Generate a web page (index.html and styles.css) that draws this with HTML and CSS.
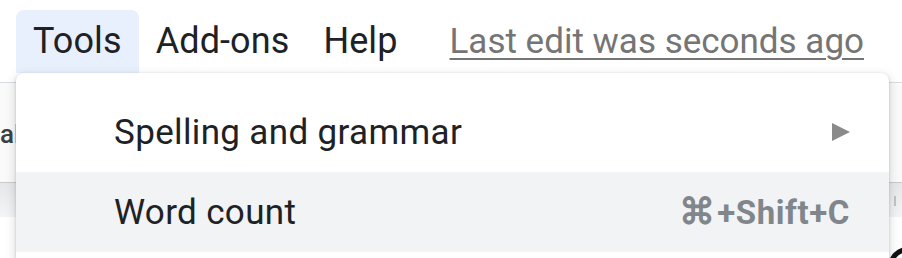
FILE: index.html
```html
<!DOCTYPE html>
<html>
<head>
<meta charset="utf-8">
<link rel="stylesheet" href="styles.css">
</head>
<body>
<div class="page">
  <nav class="menubar">
    <span class="menu-item active">Tools</span>
    <span class="menu-item">Add-ons</span>
    <span class="menu-item">Help</span>
    <a class="last-edit">Last edit was seconds ago</a>
  </nav>
  <div class="doc">
    <div class="toolbar">
      <span class="style-name">al</span>
    </div>
    <div class="ruler">
      <span class="tick"></span>
    </div>
    <div class="canvas">
      <span class="ring"></span>
    </div>
  </div>
  <div class="dropdown">
    <div class="row">
      <span class="label">Spelling and grammar</span>
      <svg class="arrow" width="18" height="18" viewBox="0 0 18 18"><polygon points="0,0 18,9 0,18" fill="#8a8a8a"/></svg>
    </div>
    <div class="row hover">
      <span class="label">Word count</span>
      <span class="shortcut"><span class="cmd">⌘</span>+Shift+C</span>
    </div>
  </div>
</div>
</body>
</html>
```
FILE: styles.css
```css
html, body {
  margin: 0;
  padding: 0;
  background: #fff;
}
body {
  width: 902px;
  height: 258px;
  overflow: hidden;
  font-family: Roboto, "Liberation Sans", Arial, sans-serif;
}
.page {
  position: relative;
  width: 902px;
  height: 258px;
  overflow: hidden;
}
.menubar {
  display: flex;
  align-items: center;
  padding: 10px 0 0 16px;
  height: 63px;
}
.menu-item {
  display: block;
  padding: 0 17px;
  height: 63px;
  line-height: 63px;
  font-size: 36px;
  color: #202124;
  letter-spacing: 0.1px;
}
.menu-item.active {
  background: #e8f0fe;
  border-radius: 8px 8px 0 0;
}
.last-edit {
  margin-left: 35px;
  font-size: 35px;
  line-height: 63px;
  color: #757575;
  text-decoration: underline;
  text-decoration-thickness: 2px;
  text-underline-offset: 5px;
}
.doc {
  display: flex;
  flex-direction: column;
}
.toolbar {
  margin-top: 9px;
  border-top: 1px solid #dadce0;
  height: 99px;
  display: flex;
  align-items: center;
  background: #fafafa;
}
.style-name {
  font-size: 26px;
  font-weight: 500;
  color: #3c4043;
  margin-top: 2px;
}
.ruler {
  height: 34px;
  border-top: 1px solid #c9cbce;
  background: linear-gradient(#e6e7e9, #f3f4f5);
  display: flex;
  justify-content: flex-end;
  align-items: center;
}
.tick {
  width: 2px;
  height: 10px;
  background: #c0c2c5;
  margin-right: 6px;
  margin-top: 2px;
}
.canvas {
  height: 41px;
  display: flex;
  justify-content: flex-end;
  overflow: hidden;
}
.ring {
  flex: none;
  width: 30px;
  height: 30px;
  border: 5px solid #111;
  border-radius: 50%;
  margin-top: 30px;
  margin-right: -26px;
}
.dropdown {
  position: absolute;
  left: 16px;
  top: 73px;
  width: 873px;
  height: 185px;
  padding-top: 19px;
  box-sizing: border-box;
  background: #fff;
  border-radius: 8px 8px 0 0;
  box-shadow: 0 1px 3px rgba(60,64,67,0.25), 0 4px 8px 3px rgba(60,64,67,0.12);
}
.row {
  display: flex;
  align-items: center;
  justify-content: space-between;
  height: 80px;
  padding: 0 39px 0 98px;
}
.row.hover {
  background: #f1f3f4;
}
.label {
  font-size: 35px;
  color: #202124;
  letter-spacing: 0.35px;
}
.shortcut {
  font-size: 33px;
  font-weight: 700;
  color: #80868b;
  letter-spacing: 0.6px;
}
.cmd {
  font-size: 36px;
  margin-right: 2px;
}
.arrow {
  display: block;
}
```
